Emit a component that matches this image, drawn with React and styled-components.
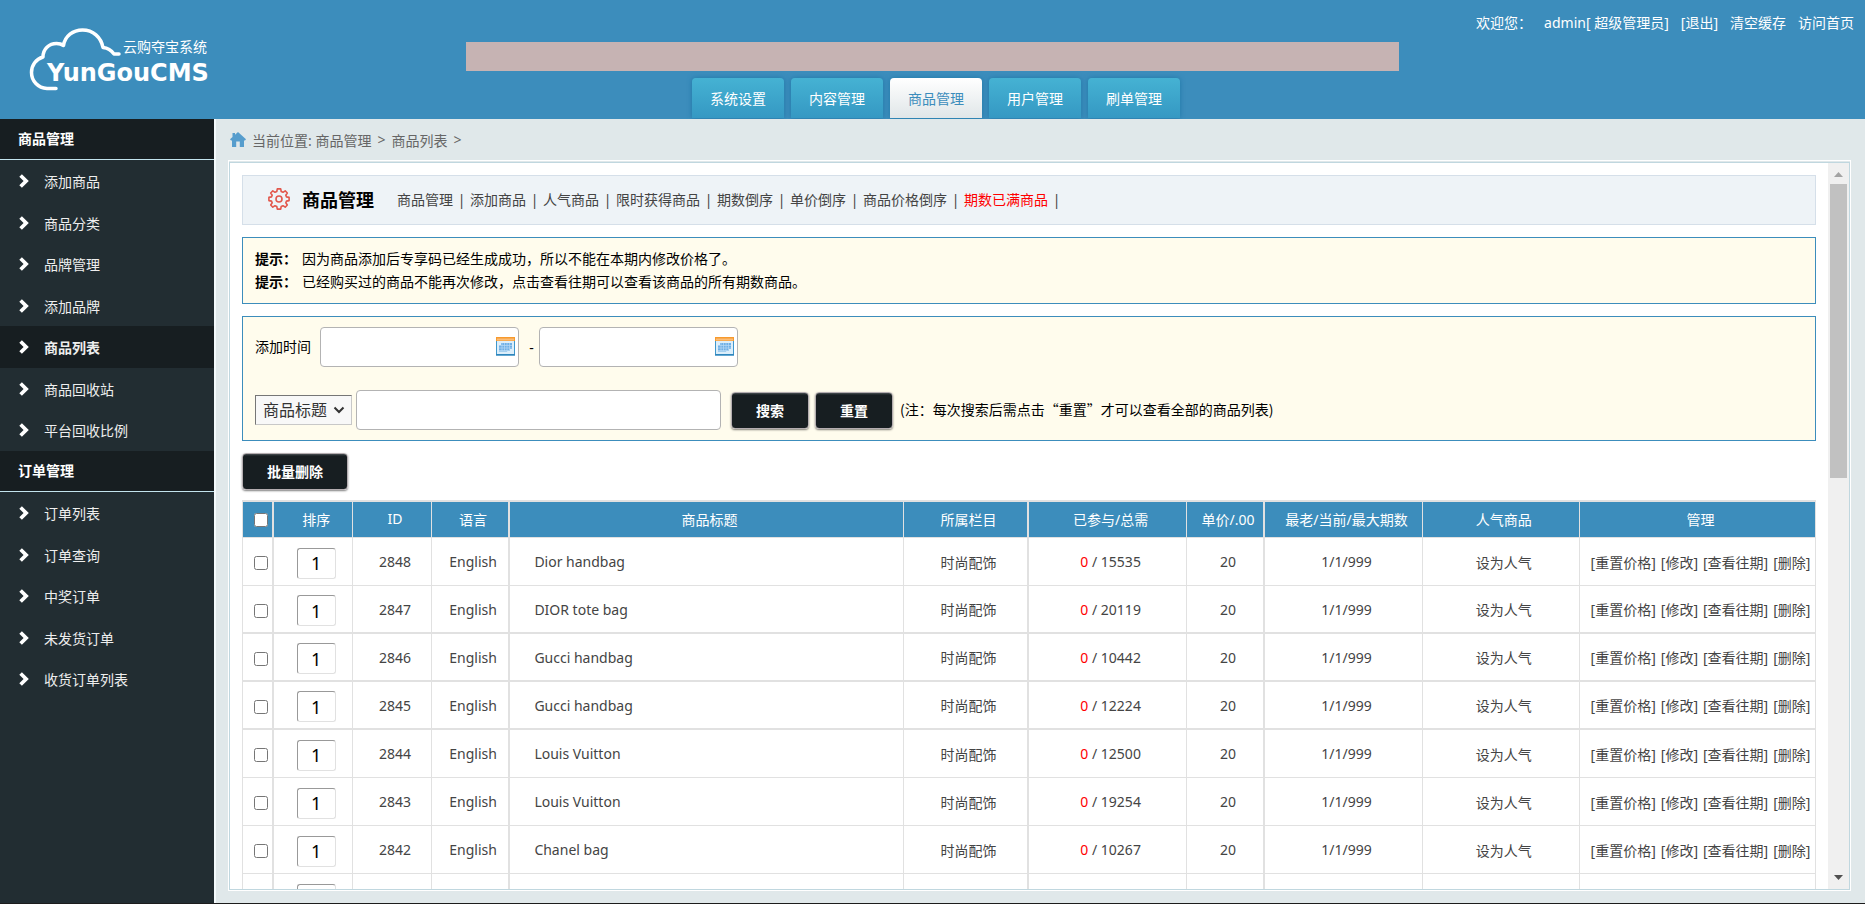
import React from 'react';
import styled, { createGlobalStyle, css } from 'styled-components';

const GlobalStyle = createGlobalStyle`
  * {
    box-sizing: border-box;
  }
  body {
    margin: 0;
    font-family: "Noto Sans", "Noto Sans CJK SC", sans-serif;
    font-size: 14px;
    color: #444;
  }
  a {
    color: inherit;
    text-decoration: none;
  }
  ul {
    list-style: none;
    margin: 0;
    padding: 0;
  }
`;

const tabs = ['系统设置', '内容管理', '商品管理', '用户管理', '刷单管理'];

const menus = [
  {
    title: '商品管理',
    items: ['添加商品', '商品分类', '品牌管理', '添加品牌', '商品列表', '商品回收站', '平台回收比例'],
  },
  {
    title: '订单管理',
    items: ['订单列表', '订单查询', '中奖订单', '未发货订单', '收货订单列表'],
  },
];

const subLinks = ['商品管理', '添加商品', '人气商品', '限时获得商品', '期数倒序', '单价倒序', '商品价格倒序', '期数已满商品'];

const columns = [
  { title: '', width: '2%', heavy: true },
  { title: '排序', width: '5%' },
  { title: 'ID', width: '5%' },
  { title: '语言', width: '5%', heavy: true },
  { title: '商品标题', width: '25%' },
  { title: '所属栏目', width: '8%', heavy: true },
  { title: '已参与/总需', width: '10%' },
  { title: '单价/.00', width: '5%', heavy: true },
  { title: '最老/当前/最大期数', width: '10%' },
  { title: '人气商品', width: '10%' },
  { title: '管理', width: '15%' },
];

const goods = [
  { id: 2848, title: 'Dior handbag', total: 15535 },
  { id: 2847, title: 'DIOR tote bag', total: 20119, heavy: true },
  { id: 2846, title: 'Gucci handbag', total: 10442, heavy: true },
  { id: 2845, title: 'Gucci handbag', total: 12224, heavy: true },
  { id: 2844, title: 'Louis Vuitton', total: 12500 },
  { id: 2843, title: 'Louis Vuitton', total: 19254 },
  { id: 2842, title: 'Chanel bag', total: 10267 },
  { id: 2841, title: 'Chanel bag', total: 11380 },
];

const Page = styled.div`
  display: flex;
  flex-direction: column;
  height: 100vh;
  overflow: hidden;
  border-bottom: 1px solid #1c1c1c;
`;

const Header = styled.header`
  display: grid;
  grid-template-columns: 1fr 2fr 1fr;
  height: 119px;
  flex: none;
  background: #3c8dbc;
  color: #fff;
`;

const Logo = styled.a`
  padding: 26px 0 0 28px;
  > svg {
    display: block;
  }
`;

const HeaderCenter = styled.div`
  display: flex;
  flex-direction: column;
  padding-top: 42px;
`;

const Notice = styled.div`
  height: 29px;
  background: #c6b3b3;
`;

const Tabs = styled.nav`
  display: flex;
  justify-content: center;
  margin-top: 7px;
`;

const Tab = styled.a`
  width: 92px;
  height: 40px;
  margin-left: 7px;
  line-height: 42px;
  text-align: center;
  border-radius: 4px 4px 0 0;
  color: #fff;
  background: linear-gradient(#45b2d3, #3598c3);
  box-shadow: 0 0 5px #1f78a8;
  ${props => props.$active && css`
    color: #3c8dbc;
    background: linear-gradient(#fff, #e0e6e8);
  `}
`;

const UserBar = styled.div`
  display: flex;
  justify-content: flex-end;
  gap: 12px;
  padding: 13px 11px 0 0;
  line-height: 20px;
  white-space: nowrap;
`;

const Body = styled.div`
  display: flex;
  flex: 1;
  min-height: 0;
`;

const Sidebar = styled.aside`
  width: 216px;
  flex: none;
  background: #222d32;
  color: #eee;
  border-right: 2px solid #f4fafc;
`;

const MenuTitle = styled.h2`
  margin: 0;
  padding-left: 18px;
  font-size: 14px;
  line-height: 40px;
  color: #fff;
  background: #171e21;
  border-bottom: 1px solid #c3e4ee;
`;

const MenuItem = styled.li`
  height: 42px;
  &:nth-child(even) {
    height: 41px;
  }
`;

const MenuLink = styled.a`
  display: flex;
  align-items: center;
  gap: 15px;
  height: 100%;
  padding-left: 19px;
  ${props => props.$active && css`
    font-weight: bold;
    background: #171e21;
  `}
`;

const Main = styled.main`
  display: flex;
  flex-direction: column;
  flex: 1;
  min-width: 0;
  padding: 0 14px 12px 12px;
  background: #e0e8ea;
`;

const Breadcrumb = styled.div`
  display: flex;
  align-items: center;
  gap: 6px;
  height: 41px;
  padding-left: 2px;
  color: #666;
`;

const Frame = styled.div`
  display: flex;
  flex: 1;
  min-height: 0;
  padding-top: 1px;
  border: 1px solid #fff;
`;

const FrameInner = styled.div`
  display: flex;
  flex: 1;
  min-width: 0;
  background: #fff;
  border: 1px solid #c0d7df;
`;

const Content = styled.div`
  flex: 1;
  min-width: 0;
  overflow-x: hidden;
  overflow-y: auto;
  scrollbar-width: none;
  padding: 12px 12px 0;
`;

const TitleBar = styled.div`
  display: flex;
  align-items: center;
  height: 50px;
  padding: 0 0 2px 25px;
  background: #eef3f7;
  border: 1px solid #d5dfe9;
  > h1 {
    margin: 0 23px 0 12px;
    font-size: 18px;
    color: #000;
  }
`;

const SubLink = styled.a`
  color: ${props => props.$hot ? '#f00' : '#444'};
`;

const Divider = styled.span`
  width: 17px;
  text-align: center;
`;

const Panel = styled.section`
  margin-top: 12px;
  padding: 9px 12px 10px;
  color: #000;
  background: #fffced;
  border: 1px solid #3c8dbc;
`;

const FilterForm = styled(Panel)`
  padding-top: 10px;
`;

const Tip = styled.p`
  display: flex;
  gap: 5px;
  margin: 0;
  line-height: 23px;
`;

const FilterRow = styled.div`
  display: flex;
  align-items: center;
  height: 40px;
  & + & {
    margin-top: 23px;
  }
  > label {
    padding-bottom: 3px;
  }
`;

const TextInput = styled.input`
  width: ${props => props.$width};
  height: 40px;
  padding: 0 6px;
  font-size: 14px;
  background: #fff;
  border: 1px solid #b3b3b3;
  border-radius: 4px;
`;

const DateField = styled.div`
  display: grid;
  align-items: center;
  > * {
    grid-area: 1 / 1;
  }
  > svg {
    justify-self: end;
    margin: 0 4px 2px 0;
  }
  label + & {
    margin-left: 9px;
  }
`;

const Dash = styled.span`
  width: 20px;
  padding-left: 5px;
  text-align: center;
`;

const SelectBox = styled.div`
  display: grid;
  align-items: center;
  width: 97px;
  margin-right: 4px;
  > * {
    grid-area: 1 / 1;
  }
  > svg {
    justify-self: end;
    margin-right: 7px;
    pointer-events: none;
  }
`;

const Select = styled.select`
  appearance: none;
  width: 100%;
  height: 30px;
  padding: 0 7px;
  font-family: inherit;
  font-size: 16px;
  color: #333;
  background: #f8f8f8;
  border: 1px solid;
  border-color: #767676 #c8c8c8 #c8c8c8 #767676;
  border-radius: 0;
`;

const Button = styled.button`
  height: 37px;
  padding: 0 24px 2px;
  font-family: inherit;
  font-size: 14px;
  font-weight: bold;
  color: #fff;
  background: linear-gradient(#4a5154, #171e21 2px);
  border: 1px solid #b4adb0;
  border-radius: 4px;
  box-shadow: 0 1px 2px rgba(0, 0, 0, 0.5);
`;

const SearchButton = styled(Button)`
  margin: 1px 0 0 ${props => props.$gap};
`;

const Hint = styled.span`
  margin-left: 7px;
  padding-bottom: 3px;
  font-family: "Noto Sans CJK SC", sans-serif;
`;

const Toolbar = styled.div`
  padding: 12px 0 10px;
  line-height: 0;
`;

const Table = styled.table`
  width: 100%;
  table-layout: fixed;
  border-collapse: separate;
  border-spacing: 0;
  border-top: 2px solid #e1e1e1;
  border-left: 1px solid #e1e1e1;
`;

const Th = styled.th`
  width: ${props => props.$width};
  height: 36px;
  padding: 0 0 2px 6px;
  font-weight: normal;
  white-space: nowrap;
  color: #fff;
  background: #3c8dbc;
  border-right: ${props => props.$heavy ? 2 : 1}px solid #e1e1e1;
  border-bottom: 1px solid #e1e1e1;
`;

const Row = styled.tr`
  > td {
    height: 48px;
    border-bottom: ${props => props.$heavy ? 2 : 1}px solid #e1e1e1;
  }
`;

const Td = styled.td`
  padding: 0 0 0 ${props => props.$left ? '24px' : '6px'};
  text-align: ${props => props.$left ? 'left' : 'center'};
  white-space: nowrap;
  border-right: ${props => props.$heavy ? 2 : 1}px solid #e1e1e1;
`;

const Check = styled.input`
  display: block;
  width: 14px;
  height: 14px;
  margin: 3px auto 0;
`;

const OrderInput = styled.input`
  display: block;
  width: 39px;
  height: 31px;
  margin: 3px auto 0;
  padding: 0;
  font-family: inherit;
  font-size: 18px;
  text-align: center;
  color: #000;
  background: #fff;
  border: 1px solid;
  border-color: #999 #e1e1e1 #e1e1e1 #999;
  border-radius: 3px;
`;

const Joined = styled.span`
  color: #f00;
`;

const Actions = styled.div`
  display: flex;
  justify-content: center;
  gap: 5px;
`;

const ScrollBar = styled.div`
  display: flex;
  flex-direction: column;
  width: 21px;
  flex: none;
  padding: 9px 2px;
  background: #f0f0f0;
  > svg {
    display: block;
    flex: none;
    margin: 0 auto;
  }
`;

const ScrollTrack = styled.div`
  flex: 1;
  margin: 7px 0;
`;

const ScrollThumb = styled.div`
  height: 43%;
  background: #c1c1c1;
`;

const LogoMark = () => (
  <svg width="190" height="68" viewBox="28 26 190 68" fill="none">
    <path
      d="M56 88.500H47C38 88 31.500 81 31.500 72.500C31.500 65 36 59 43 57C43 49 49 43.500 56.500 43.500C59 43.500 61.500 44 63.500 45.500C65 36 73 30 82.500 30C93 30 101 37 103 47.500C108 48 111.500 50.500 114 54H119"
      stroke="#fff"
      strokeWidth="3.500"
      strokeLinecap="round"
      strokeLinejoin="round"
    />
    <text x="123" y="52" fill="#fff" fontFamily="Noto Sans CJK SC, sans-serif" fontSize="14">云购夺宝系统</text>
    <text x="47" y="81" fill="#fff" fontFamily="DejaVu Sans, sans-serif" fontSize="24" fontWeight="bold">YunGouCMS</text>
  </svg>
);

const ArrowIcon = () => (
  <svg width="10" height="14" viewBox="0 0 10 14">
    <path d="M0.300 2.700L2.900 0.300L9.800 7L2.900 13.700L0.300 11.300L4.600 7Z" fill="#fff" />
  </svg>
);

const HomeIcon = () => (
  <svg width="16" height="15" viewBox="0 0 16 15" fill="#569dcd">
    <path d="M8 0L16 7.200L15 8.400H14V15H9.800V9.500H6.200V15H2V8.400H1L0 7.200L2.500 5V1H5V2.700Z" />
  </svg>
);

const GearIcon = () => (
  <svg width="22" height="22" viewBox="0 0 22 22" fill="none" stroke="#e2574c" strokeWidth="1.600" strokeLinejoin="round">
    <path d="M9.300 0.900H12.700L13.200 3.500L15 4.300L17.200 2.800L19.300 5L17.800 7.200L18.500 8.900L21.100 9.400V12.600L18.500 13.100L17.800 14.800L19.300 17L17.200 19.200L15 17.700L13.200 18.500L12.700 21.100H9.300L8.800 18.500L7 17.700L4.800 19.200L2.700 17L4.200 14.800L3.500 13.100L0.900 12.600V9.400L3.500 8.900L4.200 7.200L2.700 5L4.800 2.800L7 4.300L8.800 3.500Z" />
    <circle cx="11" cy="11" r="3" />
  </svg>
);

const CalendarIcon = () => (
  <svg width="19" height="19" viewBox="0 0 19 19">
    <rect x="0.500" y="0.500" width="18" height="17.500" fill="#dceefa" stroke="#3f97cc" />
    <rect width="19" height="4" fill="#f79a2e" />
    <rect x="1" y="1.500" width="17" height="2" fill="#fbbd78" />
    <path d="M5 6H16V12H14V13.500H3V8H5Z" fill="#6fb0e6" />
    <path d="M3 8.500H16M3 11H16M6 6V15M8.500 6V15M11 6V15M13.500 6V13" stroke="#b9daf5" strokeWidth="0.700" />
    <path d="M3 14.500H11" stroke="#a5cfee" />
    <rect y="17" width="19" height="1.500" fill="#2f86bd" />
  </svg>
);

const ArrowDown = () => (
  <svg width="12" height="8" viewBox="0 0 12 8" fill="none" stroke="#333" strokeWidth="2">
    <path d="M1.500 1.500L6 6L10.500 1.500" />
  </svg>
);

const SideMenu = ({ title, items }) => (
  <nav>
    <MenuTitle>{title}</MenuTitle>
    <ul>
      {items.map(item => (
        <MenuItem key={item}>
          <MenuLink href="#" $active={item === '商品列表'}>
            <ArrowIcon />
            <span>{item}</span>
          </MenuLink>
        </MenuItem>
      ))}
    </ul>
  </nav>
);

const Filters = () => (
  <FilterForm as="form">
    <FilterRow>
      <label htmlFor="start">添加时间</label>
      <DateField>
        <TextInput id="start" type="text" $width="199px" />
        <CalendarIcon />
      </DateField>
      <Dash>-</Dash>
      <DateField>
        <TextInput type="text" aria-label="结束时间" $width="199px" />
        <CalendarIcon />
      </DateField>
    </FilterRow>
    <FilterRow>
      <SelectBox>
        <Select aria-label="搜索类型">
          <option>商品标题</option>
        </Select>
        <ArrowDown />
      </SelectBox>
      <TextInput type="text" aria-label="关键字" $width="365px" />
      <SearchButton type="button" $gap="10px">搜索</SearchButton>
      <SearchButton type="button" $gap="6px">重置</SearchButton>
      <Hint>(注：每次搜索后需点击“重置”才可以查看全部的商品列表)</Hint>
    </FilterRow>
  </FilterForm>
);

const GoodsRow = ({ item }) => (
  <Row $heavy={item.heavy}>
    <Td $heavy><Check type="checkbox" aria-label={item.title} /></Td>
    <Td><OrderInput type="text" defaultValue="1" aria-label="排序" /></Td>
    <Td>{item.id}</Td>
    <Td $heavy>English</Td>
    <Td $left>{item.title}</Td>
    <Td $heavy>时尚配饰</Td>
    <Td><Joined>0</Joined> / {item.total}</Td>
    <Td $heavy>20</Td>
    <Td>1/1/999</Td>
    <Td><a href="#">设为人气</a></Td>
    <Td>
      <Actions>
        <a href="#">[重置价格]</a>
        <a href="#">[修改]</a>
        <a href="#">[查看往期]</a>
        <a href="#">[删除]</a>
      </Actions>
    </Td>
  </Row>
);

const App = () => {
  return (
    <Page>
      <GlobalStyle />
      <Header>
        <Logo href="#"><LogoMark /></Logo>
        <HeaderCenter>
          <Notice />
          <Tabs>
            {tabs.map(tab => (
              <Tab key={tab} href="#" $active={tab === '商品管理'}>{tab}</Tab>
            ))}
          </Tabs>
        </HeaderCenter>
        <UserBar>
          <span>欢迎您：</span>
          <span>admin[ 超级管理员]</span>
          <a href="#">[退出]</a>
          <a href="#">清空缓存</a>
          <a href="#">访问首页</a>
        </UserBar>
      </Header>
      <Body>
        <Sidebar>
          {menus.map(menu => <SideMenu key={menu.title} {...menu} />)}
        </Sidebar>
        <Main>
          <Breadcrumb>
            <HomeIcon />
            <span>当前位置: 商品管理</span>
            <span>&gt;</span>
            <span>商品列表</span>
            <span>&gt;</span>
          </Breadcrumb>
          <Frame>
            <FrameInner>
              <Content>
                <TitleBar>
                  <GearIcon />
                  <h1>商品管理</h1>
                  {subLinks.map(link => (
                    <React.Fragment key={link}>
                      <SubLink href="#" $hot={link === '期数已满商品'}>{link}</SubLink>
                      <Divider>|</Divider>
                    </React.Fragment>
                  ))}
                </TitleBar>
                <Panel>
                  <Tip><b>提示：</b><span>因为商品添加后专享码已经生成成功，所以不能在本期内修改价格了。</span></Tip>
                  <Tip><b>提示：</b><span>已经购买过的商品不能再次修改，点击查看往期可以查看该商品的所有期数商品。</span></Tip>
                </Panel>
                <Filters />
                <Toolbar>
                  <Button type="button">批量删除</Button>
                </Toolbar>
                <Table>
                  <thead>
                    <tr>
                      {columns.map(col => (
                        <Th key={col.title} $width={col.width} $heavy={col.heavy}>
                          {col.title || <Check type="checkbox" aria-label="全选" />}
                        </Th>
                      ))}
                    </tr>
                  </thead>
                  <tbody>
                    {goods.map(item => <GoodsRow key={item.id} item={item} />)}
                  </tbody>
                </Table>
              </Content>
              <ScrollBar>
                <svg width="9" height="5" viewBox="0 0 9 5"><path d="M4.500 0L9 5H0Z" fill="#a3a3a3" /></svg>
                <ScrollTrack><ScrollThumb /></ScrollTrack>
                <svg width="9" height="5" viewBox="0 0 9 5"><path d="M0 0H9L4.500 5Z" fill="#505050" /></svg>
              </ScrollBar>
            </FrameInner>
          </Frame>
        </Main>
      </Body>
    </Page>
  );
};

export default App;
